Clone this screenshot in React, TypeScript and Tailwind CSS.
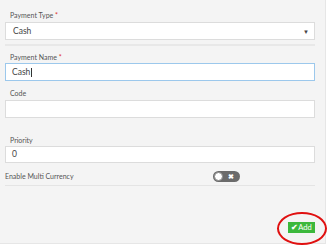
import React from "react";

function Label({ text, req }: { text: string; req?: boolean }) {
  return (
    <div className="h-[10px] pl-[5px] text-[7px] leading-[10px] text-[#555]">
      {text}
      {req && <span className="text-[#e03030]"> *</span>}
    </div>
  );
}

export default function App() {
  return (
    <div className="w-[336px] h-[250px] bg-white" style={{ fontFamily: "Lato, 'Open Sans', sans-serif" }}>
      <div className="w-[326px] h-[244px] bg-[#f4f4f4] border-r border-b border-[#e6e6e6] pl-[5px] pr-[10px] pt-[10px] flex flex-col">
        <Label text="Payment Type" req />
        <div className="mt-[2px] h-[18px] bg-white border border-[#dcdcdc] flex items-center justify-between pl-[7px] pr-[5px] text-[8.5px] text-[#444]">
          <span>Cash</span>
          <span className="text-[6px] text-[#444]">▼</span>
        </div>
        <div className="mt-[4px] h-[2px] bg-[#e8e8e8]" />
        <div className="mt-[6px]">
          <Label text="Payment Name" req />
        </div>
        <div className="mt-[1px] h-[18px] bg-white border border-[#9cc8ec] flex items-center pl-[6px] text-[8.5px] text-[#444]">
          <span>Cash</span>
          <span className="w-px h-[9px] bg-[#333] ml-[0.5px]" />
        </div>
        <div className="mt-[7px]">
          <Label text="Code" />
        </div>
        <div className="mt-[2px] h-[18px] bg-white border border-[#dcdcdc]" />
        <div className="mt-[17px]">
          <Label text="Priority" />
        </div>
        <div className="mt-[1px] h-[17px] bg-white border border-[#dcdcdc] flex items-center pl-[6px] text-[8.5px] text-[#444]">
          0
        </div>
        <div className="mt-[8px] h-[15px] flex items-center border-b border-[#e4e4e4] pb-[3px]">
          <span className="text-[7px] text-[#555]">Enable Multi Currency</span>
          <div className="ml-[139px] w-[27px] h-[11px] rounded-full bg-[#6b6b6b] flex items-center justify-between pl-[1px] pr-[6px]">
            <div className="w-[9px] h-[9px] rounded-full bg-white border border-[#888]" />
            <span className="text-[7px] font-bold text-white leading-none">✖</span>
          </div>
        </div>
        <div className="flex-1" />
        <div className="flex justify-end mb-[10px]">
          <div className="relative">
            <div className="h-[11px] w-[27px] bg-[#3cb83c] text-white text-[7.5px] flex items-center justify-center leading-none">
              <span className="font-bold">✔</span>Add
            </div>
            <div className="absolute -left-[11px] -top-[10px] w-[50px] h-[33px] rounded-[50%] border-[2px] border-[#e01010]" />
          </div>
        </div>
      </div>
    </div>
  );
}
